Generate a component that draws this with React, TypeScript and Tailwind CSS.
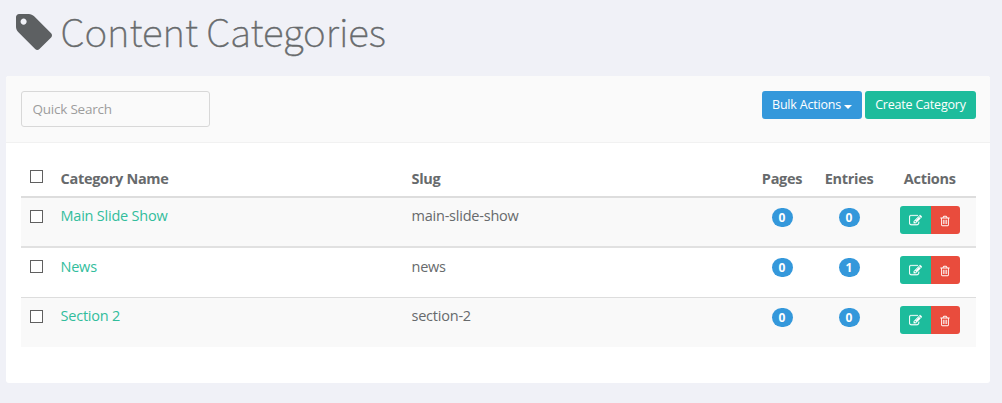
import React from "react";

const rows = [
  { name: "Main Slide Show", slug: "main-slide-show", pages: 0, entries: 0, style: "h-[50px] bg-[#f9f9f9] border-b-2 border-[#e1e1e1]", text: "pt-[8px]", check: "pt-[12px]", badge: "pt-[10px]", actions: "pt-[8px]" },
  { name: "News", slug: "news", pages: 0, entries: 1, style: "h-[50px] bg-white border-b border-[#dddddd]", text: "pt-[9px]", check: "pt-[12px]", badge: "pt-[10px]", actions: "pt-[8px]" },
  { name: "Section 2", slug: "section-2", pages: 0, entries: 0, style: "h-[49px] bg-[#f9f9f9]", text: "pt-[8px]", check: "pt-[12px]", badge: "pt-[10px]", actions: "pt-[8px]" },
];

const columns = "grid grid-cols-[39.5px_351px_341.5px_58px_76px_88.5px]";

function TagIcon() {
  return (
    <svg viewBox="0 0 1515 1515" className="ml-4 mt-[14px] h-9 w-9 shrink-0 fill-[#5d6062]">
      <path transform="translate(0 -128)" d="M448 448q0-53-37.5-90.5t-90.5-37.5-90.5 37.5-37.5 90.5 37.5 90.5 90.5 37.5 90.5-37.5 37.5-90.5zm1067 576q0 53-37 90l-491 492q-39 37-91 37-53 0-90-37l-715-716q-38-37-64.5-101t-26.5-117v-416q0-52 38-90t90-38h416q53 0 117 26.5t102 64.5l715 714q37 39 37 91z" />
    </svg>
  );
}

function EditIcon() {
  return (
    <svg viewBox="0 0 1792 1792" className="h-[13px] w-[13px] fill-white stroke-white" strokeWidth="30">
      <path d="M888 1184l116-116-152-152-116 116v56h96v96h56zm440-720q-16-16-33 1l-350 350q-17 17-1 33t33-1l350-350q17-17 1-33zm80 594v190q0 119-84.5 203.5t-203.5 84.5h-832q-119 0-203.5-84.5t-84.5-203.5v-832q0-119 84.5-203.5t203.5-84.5h832q63 0 117 25 15 7 18 23 3 17-9 29l-49 49q-14 14-32 8-23-6-45-6h-832q-66 0-113 47t-47 113v832q0 66 47 113t113 47h832q66 0 113-47t47-113v-126q0-13 9-22l64-64q15-15 35-7t20 29zm-96-738l288 288-672 672h-288v-288zm444 132l-92 92-288-288 92-92q28-28 68-28t68 28l152 152q28 28 28 68t-28 68z" />
    </svg>
  );
}

function TrashIcon() {
  return (
    <svg viewBox="0 0 1792 1792" className="h-[12px] w-[12px] fill-white">
      <path d="M704 736v576q0 14-9 23t-23 9h-64q-14 0-23-9t-9-23v-576q0-14 9-23t23-9h64q14 0 23 9t9 23zm256 0v576q0 14-9 23t-23 9h-64q-14 0-23-9t-9-23v-576q0-14 9-23t23-9h64q14 0 23 9t9 23zm256 0v576q0 14-9 23t-23 9h-64q-14 0-23-9t-9-23v-576q0-14 9-23t23-9h64q14 0 23 9t9 23zm128 724v-948h-896v948q0 22 7 40.5t14.5 27 10.5 8.5h832q3 0 10.5-8.5t14.5-27 7-40.5zm-672-1076h448l-48-117q-7-9-17-11h-317q-10 2-17 11zm928 32v64q0 14-9 23t-23 9h-96v948q0 83-47 143.5t-113 60.5h-832q-66 0-113-58.5t-47-141.5v-952h-96q-14 0-23-9t-9-23v-64q0-14 9-23t23-9h309l70-167q15-37 54-63t79-26h320q40 0 79 26t54 63l70 167h309q14 0 23 9t9 23z" />
    </svg>
  );
}

function Checkbox({ label }: { label: string }) {
  return (
    <input
      type="checkbox"
      aria-label={label}
      className="ml-[9px] block h-[13px] w-[13px] appearance-none border border-[#606060] bg-white"
    />
  );
}

function Badge({ value }: { value: number }) {
  return (
    <span className="flex h-[19px] w-[21px] items-center justify-center rounded-[10px] bg-[#3498db] text-[12px] leading-none font-bold tracking-normal text-white">
      {value}
    </span>
  );
}

export default function App() {
  return (
    <div className="flex h-[403px] w-[1002px] flex-col bg-[#f0f1f7] font-['Open_Sans',sans-serif] text-[14.5px] tracking-[-0.22px] text-[#676a6c]">
      <header className="flex h-[76px] shrink-0 items-start">
        <TagIcon />
        <h1 className="ml-[8.5px] font-['Noto_Sans_CJK_JP',sans-serif] text-[38.7px] leading-[60px] font-thin tracking-normal whitespace-nowrap [-webkit-text-stroke:0.5px_#676a6c]">
          Content Categories
        </h1>
      </header>
      <main className="ml-1.5 flex h-[307px] w-[984px] flex-col overflow-hidden rounded-[3px] bg-white">
        <div className="flex h-[67px] shrink-0 items-start border-b border-[#f1f1f1] bg-[#fafafa] px-[15px] pt-[15px]">
          <input
            placeholder="Quick Search"
            className="h-9 w-[189px] rounded-[3px] border border-[#d8d8d8] bg-[#fafafa] px-[10.5px] text-[13.5px] placeholder:text-[#9d9d9d]"
          />
          <div className="ml-auto -mr-px flex gap-[3px] text-[12.5px] tracking-[-0.2px] text-white">
            <button className="flex h-7 w-[100px] items-center justify-center gap-[3px] rounded-[3px] bg-[#3498db] whitespace-nowrap">
              Bulk Actions
              <span className="mt-[3px] border-x-4 border-t-4 border-x-transparent border-t-white" />
            </button>
            <button className="h-7 w-[111px] rounded-[3px] bg-[#1dbc9c] whitespace-nowrap">Create Category</button>
          </div>
        </div>
        <section className="ml-[15px] mr-[14.5px] mt-[13px] flex flex-col">
          <div className={`${columns} h-[42px] border-b-2 border-[#dddddd] leading-[20px] font-bold tracking-[-0.3px]`}>
            <div className="pt-[14px]"><Checkbox label="Select all" /></div>
            <div className="pt-[13px]">Category Name</div>
            <div className="pt-[13px]">Slug</div>
            <div className="pt-[13px] text-center">Pages</div>
            <div className="pt-[13px] text-center">Entries</div>
            <div className="pt-[13px] pr-[3px] text-center">Actions</div>
          </div>
          {rows.map((row) => (
            <div key={row.slug} className={`${columns} ${row.style} leading-[20px]`}>
              <div className={row.check}><Checkbox label={row.name} /></div>
              <a className={`${row.text} text-[#32bd9c]`}>{row.name}</a>
              <div className={row.text}>{row.slug}</div>
              <div className={`${row.badge} flex items-start justify-center`}><Badge value={row.pages} /></div>
              <div className={`${row.badge} flex items-start justify-center`}><Badge value={row.entries} /></div>
              <div className={`${row.actions} flex items-start justify-center pr-[3px]`}>
                <div className="flex h-7 w-[60px] overflow-hidden rounded-[3px]">
                  <button aria-label="Edit" className="flex w-[31px] items-center justify-center bg-[#1dbc9c] pt-px">
                    <EditIcon />
                  </button>
                  <button aria-label="Delete" className="flex flex-1 items-center justify-center bg-[#e94c3d] pt-0.5">
                    <TrashIcon />
                  </button>
                </div>
              </div>
            </div>
          ))}
        </section>
      </main>
    </div>
  );
}
